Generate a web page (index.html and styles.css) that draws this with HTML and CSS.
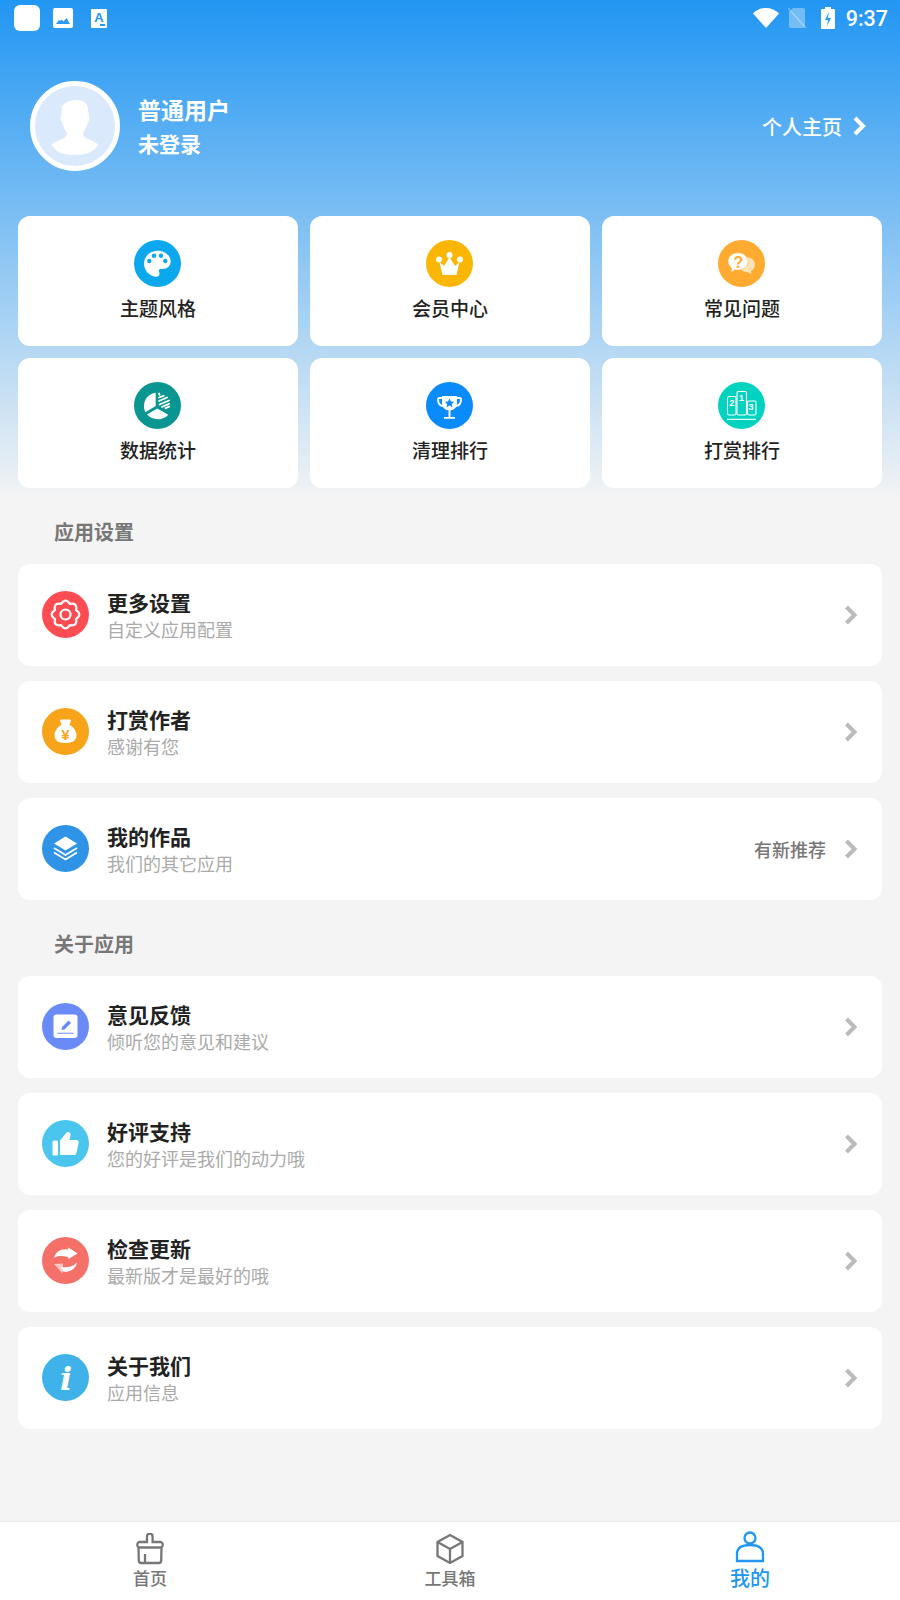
FILE: index.html
```html
<!DOCTYPE html>
<html lang="zh-CN">
<head>
  <meta charset="UTF-8" />
  <meta name="viewport" content="width=device-width, initial-scale=1" />
  <title>我的</title>
  <link rel="stylesheet" href="styles.css">
</head>
<body>
  <div class="page">
    <div class="main">
      <div class="top">
        <div class="status">
          <div class="status-left">
            <span class="app-square"></span>
            <svg class="st-pic" viewBox="0 0 20 20"><path fill="#fff" fill-rule="evenodd" d="M2 0h16a2 2 0 0 1 2 2v16a2 2 0 0 1-2 2H2a2 2 0 0 1-2-2V2a2 2 0 0 1 2-2zM3 16h14l-3.500-6-3 3.500-2-2-1.500 1.500-1-1z"/></svg>
            <svg class="st-a" viewBox="0 0 16 19"><rect width="16" height="19" rx="1" fill="#fff"/><text x="8" y="12.500" class="st-a-text">A</text><rect x="9" y="15" width="5" height="2" fill="#2196f3"/></svg>
          </div>
          <div class="status-right">
            <svg class="st-wifi" viewBox="0 0 26 20"><path fill="#fff" d="M0 5.500C3.500 2 8 0 13 0s9.500 2 13 5.500L13 20z"/></svg>
            <svg class="st-sim" viewBox="0 0 18 20"><path fill="#fff" opacity=".35" d="M5 0h10a2 2 0 0 1 2 2v16a2 2 0 0 1-2 2H3a2 2 0 0 1-2-2V4z"/><path stroke="#fff" stroke-opacity=".35" stroke-width="1.500" d="M0 0l18 20"/></svg>
            <svg class="st-bat" viewBox="0 0 14 22"><path fill="#fff" fill-rule="evenodd" d="M4 0h6v2h3a1 1 0 0 1 1 1v18a1 1 0 0 1-1 1H1a1 1 0 0 1-1-1V3a1 1 0 0 1 1-1h3zM8 5l-4 8h3l-1 6 4-8H7z"/></svg>
            <span class="time">9:37</span>
          </div>
        </div>

        <div class="profile">
          <div class="avatar">
            <svg viewBox="0 0 80 80"><path fill="#fff" d="M27 21c2-5 8-7 14-7 7 0 12 3 12 9l1 8c1 2 0 4-1 5-1 4-3 8-5 11 0 3 2 5 5 6 4 2 9 3 10 6-3 6-11 10-24 10S20 65 17 59c1-3 6-4 10-6 3-1 5-3 5-6-2-3-4-7-5-11-1-1-2-3-1-5z"/></svg>
          </div>
          <div class="profile-text">
            <div class="profile-name">普通用户</div>
            <div class="profile-login">未登录</div>
          </div>
          <div class="profile-link">
            个人主页
            <svg class="chev-white" viewBox="0 0 14 20"><path d="M3 2l8 8-8 8" /></svg>
          </div>
        </div>

        <div class="grid">
          <div class="card">
            <div class="ico c-palette"><svg viewBox="0 0 47 47"><path fill="#fff" d="M23.500 10.700C31 10.700 36.700 15.500 36.700 21.500 36.700 26 33 29 28.500 29h-2c-1.500 0-2 1.500-1.500 2.500 1 2 .5 5.200-2.500 5.200C15.500 36.700 10 30.500 10 23.500 10 16.500 16 10.700 23.500 10.700z"/><g fill="#0ba8ee"><circle cx="15.300" cy="21" r="2.200"/><circle cx="20" cy="15.700" r="2.200"/><circle cx="27" cy="15.700" r="2.200"/><circle cx="31.300" cy="21" r="2.200"/></g></svg></div>
            <div class="card-label">主题风格</div>
          </div>
          <div class="card">
            <div class="ico c-crown"><svg viewBox="0 0 47 47"><g fill="#fff"><circle cx="13" cy="19.500" r="3"/><circle cx="23.500" cy="15" r="3"/><circle cx="34" cy="19.500" r="3"/><path d="M13.500 22l4.500 4 5.500-9 5.500 9 4.500-4-3 13H16.500z"/></g></svg></div>
            <div class="card-label">会员中心</div>
          </div>
          <div class="card">
            <div class="ico c-faq"><svg viewBox="0 0 47 47"><path fill="#fff" opacity=".65" d="M28 17c5 0 9 3 9 7.500 0 3-1.700 5.300-4 6.500l.5 3-4.500-2c-5 0-8-3-8-7 0-5 3-8 7-8z"/><path fill="#fff" stroke="#ffaa30" stroke-width=".5" d="M20 12.800c5.500 0 10 3.700 10 8.700S25.500 30 20 30h-3l-4 2.200.5-4.200C11.500 26.500 10 24 10 21.500 10 16.500 14.500 12.800 20 12.800z"/><text x="20.500" y="28" class="faq-q">?</text></svg></div>
            <div class="card-label">常见问题</div>
          </div>
          <div class="card">
            <div class="ico c-stats"><svg viewBox="0 0 47 47"><path fill="#fff" d="M21.700 10.800v13.200l-10.400 6.200C10.300 28 10 26 10 24c0-7 5-12.500 11.700-13.200z"/><path fill="#fff" d="M13 32.600l10.300-6 11 6.200c-2.500 2.800-6.300 4.500-10.500 4.500-4.200 0-8-1.800-10.800-4.700z"/><path stroke="#fff" stroke-width="1.800" stroke-linecap="round" fill="none" d="M25 11.500l.6 1.300M25 15.500l4.600-1.700M25 19l8-3.500M25.500 22.500l9.500-4M28 24.800l7-3M31.500 26.200l3.800-1.500"/></svg></div>
            <div class="card-label">数据统计</div>
          </div>
          <div class="card">
            <div class="ico c-trophy"><svg viewBox="0 0 47 47"><path fill="none" stroke="#fff" stroke-width="2" d="M16.500 16h-3a1.500 1.500 0 0 0-1.500 1.500c0 4 2 6 5 6.500M30.500 16h3a1.500 1.500 0 0 1 1.500 1.500c0 4-2 6-5 6.500"/><path fill="#fff" d="M16 14h15v7.500c0 4-3.300 7-7.500 7s-7.500-3-7.500-7zM22.500 28h2v7.500h-2zM18 35h11v1.800H18z"/><path fill="#0a8bfb" d="M23.500 16.500l1.400 2.900 3.200.4-2.300 2.200.6 3.200-2.900-1.600-2.900 1.600.6-3.200-2.300-2.200 3.200-.4z"/></svg></div>
            <div class="card-label">清理排行</div>
          </div>
          <div class="card">
            <div class="ico c-podium"><svg viewBox="0 0 47 47"><g fill="none" stroke="#fff" stroke-width="1.100"><rect x="9.500" y="14.500" width="8.500" height="18.500" rx="1.500"/><rect x="19" y="9.500" width="9.500" height="23.500" rx="1.500"/><rect x="29.500" y="19" width="8.500" height="14" rx="1.500"/><path d="M9 37.300h29"/></g><text x="14" y="24" class="pod-num">2</text><text x="23.500" y="19" class="pod-num">1</text><text x="33" y="28" class="pod-num">3</text></svg></div>
            <div class="card-label">打赏排行</div>
          </div>
        </div>
      </div>

      <div class="sec-title">应用设置</div>
      <div class="list">
        <div class="row">
          <div class="ico c-gear"><svg viewBox="0 0 47 47"><path fill="none" stroke="#fff" stroke-width="2.200" stroke-linejoin="round" d="M34.100 19.100Q40.500 23.500 34.100 27.900 35.500 35.500 27.900 34.100 23.500 40.500 19.100 34.100 11.500 35.500 12.900 27.900 6.500 23.500 12.900 19.100 11.500 11.500 19.100 12.900 23.500 6.500 27.900 12.900 35.500 11.500 34.100 19.100z"/><circle cx="23.500" cy="23.500" r="5" fill="none" stroke="#fff" stroke-width="2.200"/></svg></div>
          <div class="row-text"><div class="row-title">更多设置</div><div class="row-sub">自定义应用配置</div></div>
          <svg class="chev" viewBox="0 0 14 20"><path d="M2.500 2l8 8-8 8"/></svg>
        </div>
        <div class="row">
          <div class="ico c-bag"><svg viewBox="0 0 47 47"><path fill="#fff" d="M18 12.500c0-1 1-1 2-1h7c1 0 2 0 2 1l-1.500 4.500c4 2 7 6 7 10.500 0 5-4 7.500-11 7.500s-11-2.500-11-7.500c0-4.500 3-8.500 7-10.500z"/><text x="23.500" y="31.500" class="bag-yen">¥</text></svg></div>
          <div class="row-text"><div class="row-title">打赏作者</div><div class="row-sub">感谢有您</div></div>
          <svg class="chev" viewBox="0 0 14 20"><path d="M2.500 2l8 8-8 8"/></svg>
        </div>
        <div class="row">
          <div class="ico c-layers"><svg viewBox="0 0 47 47"><path fill="#fff" d="M23.500 11.500l11.500 7-11.500 7-11.500-7z"/><path fill="none" stroke="#fff" stroke-width="1.800" d="M12 23l11.500 7 11.500-7M12 27.500l11.500 7 11.500-7"/></svg></div>
          <div class="row-text"><div class="row-title">我的作品</div><div class="row-sub">我们的其它应用</div></div>
          <span class="row-note">有新推荐</span>
          <svg class="chev" viewBox="0 0 14 20"><path d="M2.500 2l8 8-8 8"/></svg>
        </div>
      </div>

      <div class="sec-title sec-second">关于应用</div>
      <div class="list">
        <div class="row">
          <div class="ico c-edit"><svg viewBox="0 0 47 47"><rect x="11.500" y="11.500" width="24" height="23.500" rx="3" fill="#fff"/><path fill="#6a8bf7" d="M26.500 17.500l2.500 2.500-6.500 6.500-3 .6.500-3.100zM15.500 29.800h16v1h-16z"/></svg></div>
          <div class="row-text"><div class="row-title">意见反馈</div><div class="row-sub">倾听您的意见和建议</div></div>
          <svg class="chev" viewBox="0 0 14 20"><path d="M2.500 2l8 8-8 8"/></svg>
        </div>
        <div class="row">
          <div class="ico c-thumb"><svg viewBox="0 0 47 47"><rect x="10.500" y="20.500" width="5.500" height="15" rx="1.500" fill="#fff"/><path fill="#fff" d="M18 20.500l5-6c1-1.300 1.500-2.500 3-2.500 2 0 3 1.500 2.500 3.500l-1 4.500h7c1.500 0 2.500 1.200 2.200 2.700l-2.200 10c-.3 1.300-1.200 2.300-2.700 2.300H18z"/></svg></div>
          <div class="row-text"><div class="row-title">好评支持</div><div class="row-sub">您的好评是我们的动力哦</div></div>
          <svg class="chev" viewBox="0 0 14 20"><path d="M2.500 2l8 8-8 8"/></svg>
        </div>
        <div class="row">
          <div class="ico c-sync"><svg viewBox="0 0 47 47"><path fill="#fff" d="M12 21C13.500 15 19 11.500 26 12.500L26.500 10.500 35.500 16.500 26.500 22 26 20C20 18.500 15.500 18.500 12 21z"/><path fill="#fff" d="M35 25.500C34 32 27 36 21 34.500L19 30C25 31 31 30 35 25.500z"/><path fill="#fff" opacity=".6" d="M20.500 36.500L12 27 21 26.500z"/></svg></div>
          <div class="row-text"><div class="row-title">检查更新</div><div class="row-sub">最新版才是最好的哦</div></div>
          <svg class="chev" viewBox="0 0 14 20"><path d="M2.500 2l8 8-8 8"/></svg>
        </div>
        <div class="row">
          <div class="ico c-info"><svg viewBox="0 0 47 47"><text x="24" y="36" class="info-i">i</text></svg></div>
          <div class="row-text"><div class="row-title">关于我们</div><div class="row-sub">应用信息</div></div>
          <svg class="chev" viewBox="0 0 14 20"><path d="M2.500 2l8 8-8 8"/></svg>
        </div>
      </div>
    </div>

    <div class="tabbar">
      <div class="tab">
        <svg class="tab-icon" viewBox="0 0 32 32"><path d="M13 9V3.500a2.800 2.800 0 0 1 5.600 0V9H27a3 3 0 0 1 0 5.500H5A3 3 0 0 1 5 9zM4.500 14.500l.3 13a2.500 2.500 0 0 0 2.500 2.500h17.400a2.500 2.500 0 0 0 2.500-2.500l.3-13M11 30v-9"/></svg>
        <span>首页</span>
      </div>
      <div class="tab">
        <svg class="tab-icon" viewBox="0 0 32 32"><path d="M16 2l12.500 7v14L16 30 3.500 23V9zM3.500 9L16 16l12.500-7M16 16v14"/></svg>
        <span>工具箱</span>
      </div>
      <div class="tab tab-on">
        <svg class="tab-icon" viewBox="0 0 32 32"><circle cx="16" cy="7" r="5.500"/><path d="M3 30v-7c0-6 5-9 13-9s13 3 13 9v7z"/></svg>
        <span>我的</span>
      </div>
    </div>
  </div>
</body>
</html>
```

FILE: styles.css
```css
* {
  box-sizing: border-box;
}
body {
  margin: 0;
  font-family: "Noto Sans CJK SC", "Noto Sans", sans-serif;
  background: #f4f4f4;
}
.page {
  width: 900px;
  height: 1600px;
  display: flex;
  flex-direction: column;
  overflow: hidden;
}
.main {
  flex: 1;
}
.top {
  padding-bottom: 12px;
  background: linear-gradient(#2196f3, #f4f4f4 500px);
}

/* status bar */
.status {
  height: 36px;
  display: flex;
  justify-content: space-between;
  align-items: center;
  padding: 0 12px 0 14px;
}
.status-left, .status-right {
  display: flex;
  align-items: center;
}
.app-square {
  width: 26px;
  height: 26px;
  background: #fff;
  border-radius: 6px;
}
.st-pic {
  width: 20px;
  height: 20px;
  margin-left: 13px;
}
.st-a {
  width: 16px;
  height: 19px;
  margin-left: 18px;
}
.st-a-text {
  font: bold 13px "Liberation Sans", sans-serif;
  fill: #2196f3;
  text-anchor: middle;
}
.st-wifi {
  width: 26px;
  height: 20px;
}
.st-sim {
  width: 18px;
  height: 20px;
  margin-left: 9px;
}
.st-bat {
  width: 14px;
  height: 22px;
  margin-left: 15px;
}
.time {
  margin-left: 11px;
  color: #fff;
  font: 500 21.500px Roboto, sans-serif;
}

/* profile */
.profile {
  display: flex;
  align-items: center;
  height: 90px;
  margin: 45px 0;
  padding: 0 34px 0 30px;
  color: #fff;
}
.avatar {
  width: 90px;
  height: 90px;
  border: 5px solid #fff;
  border-radius: 50%;
  background: #dbe9fd;
}
.avatar svg {
  display: block;
  width: 80px;
  height: 80px;
}
.profile-text {
  flex: 1;
  margin-left: 18px;
  font-weight: 700;
}
.profile-name {
  font-size: 23px;
  line-height: 34px;
}
.profile-login {
  font-size: 21px;
  line-height: 34px;
}
.profile-link {
  display: flex;
  align-items: center;
  font-size: 20px;
  font-weight: 500;
}
.chev-white {
  width: 14px;
  height: 20px;
  margin-left: 10px;
}
.chev-white path {
  fill: none;
  stroke: #fff;
  stroke-width: 4;
}

/* shortcut cards */
.grid {
  display: grid;
  grid-template-columns: repeat(3, 280px);
  grid-auto-rows: 130px;
  gap: 12px;
  padding: 0 18px;
}
.card {
  background: #fff;
  border-radius: 12px;
  padding-top: 24px;
  display: flex;
  flex-direction: column;
  align-items: center;
}
.card .ico {
  margin-right: 1px;
}
.card-label {
  margin-top: 7px;
  font-size: 19px;
  line-height: 28px;
  font-weight: 500;
  color: #222;
}

/* icon circles */
.ico {
  width: 47px;
  height: 47px;
  flex: none;
  border-radius: 50%;
}
.ico svg {
  display: block;
  width: 47px;
  height: 47px;
}
.c-palette { background: #0ba8ee; }
.c-crown { background: #fab603; }
.c-faq { background: #ffaa30; }
.c-stats { background: #099590; }
.c-trophy { background: #0a8bfb; }
.c-podium { background: #00d2c0; }
.c-gear { background: #fe4d52; }
.c-bag { background: #f8a41a; }
.c-layers { background: #2f94e8; }
.c-edit { background: #6a8bf7; }
.c-thumb { background: #4ac5ee; }
.c-sync { background: #f6706a; }
.c-info { background: #3fb3e9; }
.faq-q {
  font: bold 16px "Liberation Sans", sans-serif;
  fill: #ffaa30;
  text-anchor: middle;
}
.pod-num {
  font: bold 9.500px "Liberation Sans", sans-serif;
  fill: #fff;
  text-anchor: middle;
}
.bag-yen {
  font: bold 15px "Liberation Sans", sans-serif;
  fill: #f8a41a;
  text-anchor: middle;
}
.info-i {
  font: italic bold 32px "DejaVu Serif", serif;
  fill: #fff;
  text-anchor: middle;
}

/* list rows */
.sec-title {
  height: 64px;
  line-height: 64px;
  padding-left: 54px;
  font-size: 20px;
  font-weight: 700;
  color: #777;
}
.sec-second {
  height: 76px;
  line-height: 88px;
}
.list {
  display: flex;
  flex-direction: column;
  gap: 15px;
  padding: 0 18px;
}
.row {
  height: 102px;
  background: #fff;
  border-radius: 12px;
  padding: 0 24px;
  display: flex;
  align-items: center;
}
.row .ico {
  margin-bottom: 1px;
}
.row-text {
  flex: 1;
  margin-left: 18px;
}
.row-title {
  font-size: 21px;
  line-height: 26px;
  font-weight: 700;
  color: #222;
}
.row-sub {
  margin-top: 1px;
  font-size: 18px;
  line-height: 26px;
  color: #aaa;
}
.row-note {
  margin-right: 18px;
  font-size: 18px;
  font-weight: 500;
  color: #777;
}
.chev {
  width: 14px;
  height: 20px;
}
.chev path {
  fill: none;
  stroke: #bbb;
  stroke-width: 4;
}

/* bottom tabs */
.tabbar {
  height: 79px;
  background: #fff;
  border-top: 1px solid #e8e8e8;
  display: grid;
  grid-template-columns: repeat(3, 1fr);
}
.tab {
  display: flex;
  flex-direction: column;
  align-items: center;
  padding-top: 11px;
  font-size: 17px;
  line-height: 24px;
  font-weight: 500;
  color: #777;
}
.tab-icon {
  width: 32px;
  height: 32px;
  margin-bottom: 1px;
}
.tab-icon path, .tab-icon circle {
  fill: none;
  stroke: #777;
  stroke-width: 2.300;
}
.tab-on {
  font-size: 20px;
  color: #2196f3;
}
.tab-on .tab-icon {
  margin: -2px 0 3px;
}
.tab-on .tab-icon path, .tab-on .tab-icon circle {
  stroke: #2196f3;
}
```
